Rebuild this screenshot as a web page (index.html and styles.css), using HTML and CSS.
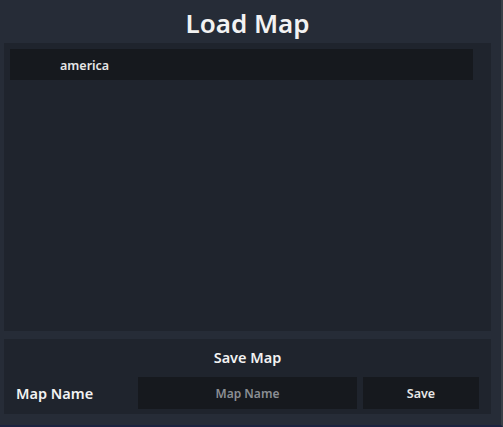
FILE: index.html
```html
<!DOCTYPE html>
<html lang="en">
  <head>
    <meta charset="UTF-8" />
    <meta name="viewport" content="width=device-width, initial-scale=1.0" />
    <title>Load Map</title>
    <link rel="stylesheet" href="styles.css">
  </head>
  <body>
    <div class="window">
      <h1 class="title">Load Map</h1>

      <div class="map-list">
        <div class="map-item">america</div>
      </div>

      <div class="save-panel">
        <h2 class="save-title">Save Map</h2>
        <div class="save-row">
          <label for="mapName">Map Name</label>
          <input type="text" id="mapName" placeholder="Map Name" />
          <button type="button">Save</button>
        </div>
      </div>
    </div>
  </body>
</html>
```

FILE: styles.css
```css
html,
body {
  margin: 0;
  padding: 0;
  height: 100%;
}

body {
  font-family: "Noto Sans", "Open Sans", sans-serif;
  background-color: #262c37;
  color: #f2f2f2;
  border-right: 2px solid #3a3f47;
  border-bottom: 2px solid #1b2340;
  box-sizing: border-box;
}

.window {
  width: 495px;
  padding: 0 4px;
  box-sizing: border-box;
}

.title {
  margin: 0;
  height: 43px;
  font-size: 26px;
  font-weight: 600;
  line-height: 46px;
  text-align: center;
}

.map-list {
  height: 288px;
  background-color: #1f242d;
  padding: 6px 18px 0 6px;
  box-sizing: border-box;
}

.map-item {
  height: 31px;
  background-color: #16191e;
  padding-left: 50px;
  font-size: 12.5px;
  font-weight: 600;
  line-height: 33px;
  color: #e6e6e6;
}

.save-panel {
  margin-top: 8px;
  height: 75px;
  background-color: #1f242d;
  padding: 6px 12px 0 12px;
  box-sizing: border-box;
}

.save-title {
  margin: 0;
  height: 32px;
  font-size: 14.5px;
  font-weight: 600;
  line-height: 24px;
  text-align: center;
}

.save-row {
  display: flex;
  align-items: center;
  gap: 6px;
}

.save-row label {
  width: 116px;
  flex-shrink: 0;
  font-size: 14.5px;
  font-weight: 600;
}

.save-row input {
  width: 219px;
  height: 32px;
  flex-shrink: 0;
  box-sizing: border-box;
  border: none;
  outline: none;
  background-color: #16191e;
  color: #f2f2f2;
  font-family: inherit;
  font-size: 12px;
  font-weight: 600;
  text-align: center;
}

.save-row input::placeholder {
  color: #8b8e93;
}

.save-row button {
  width: 116px;
  height: 32px;
  flex-shrink: 0;
  border: none;
  background-color: #16191e;
  color: #e6e6e6;
  font-family: inherit;
  font-size: 12.5px;
  font-weight: 600;
  cursor: pointer;
}
```
